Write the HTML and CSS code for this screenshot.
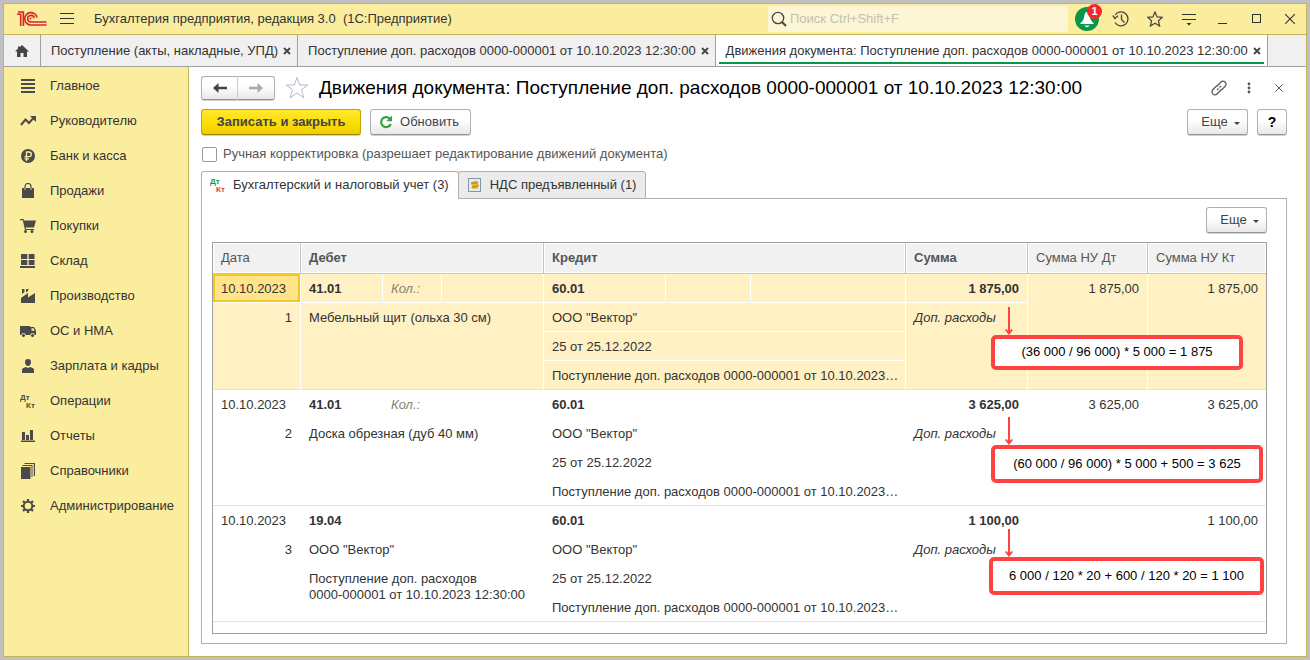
FILE: index.html
```
<!DOCTYPE html>
<html lang="ru">
<head>
<meta charset="utf-8">
<meta name="viewport" content="width=device-width, initial-scale=1">
<title>Бухгалтерия предприятия, редакция 3.0</title>
<link rel="stylesheet" href="styles.css">
</head>
<body>
<div class="window">
  <header class="titlebar">
    <svg class="logo" width="30" height="16" viewBox="0 0 30 16" fill="none" stroke="#d8232a" stroke-width="1.6"><path d="M0 3.200H3.700V15M1 1H6.400V15"/><path d="M20 6.500A6.200 6.200 0 1 0 14 14H29.500M17.200 7A3.300 3.300 0 1 0 14 11H29.500"/><path d="M15 7.600A1 1 0 1 0 14 8.800" stroke-width="1"/></svg>
    <button class="icon-btn burger" aria-label="Меню"><svg width="14" height="12" viewBox="0 0 14 12" fill="#333"><path d="M0 0H14V1H0ZM0 5H14V6H0ZM0 10H14V11H0Z"/></svg></button>
    <div class="app-title">Бухгалтерия предприятия, редакция 3.0&nbsp; (1С:Предприятие)</div>
    <label class="search">
      <svg width="16" height="16" viewBox="0 0 16 16" fill="none" stroke="#444" stroke-width="1.3"><circle cx="7" cy="7" r="5.7"/><path d="M11 11L15 15" stroke-width="2"/></svg>
      <input type="search" placeholder="Поиск Ctrl+Shift+F" aria-label="Поиск">
    </label>
    <div class="window-tools">
      <button class="icon-btn bell" aria-label="Уведомления"><svg width="24" height="24" viewBox="0 0 24 24"><circle cx="12" cy="12" r="12" fill="#0a9648"/><path d="M12 5C10.800 5 9.800 6 9.500 8L8.500 12.500L5 17H19L15.500 12.500L14.500 8C14.200 6 13.200 5 12 5ZM9 18.500H15L12 20.500Z" fill="#fff"/></svg><span class="badge">1</span></button>
      <button class="icon-btn" aria-label="История"><svg width="18" height="18" viewBox="0 0 18 18" fill="none" stroke="#444" stroke-width="1.3"><path d="M3.200 5A7 7 0 1 1 3 12.500M9.500 4.500V9.500L12.500 12.500"/><path d="M.8 5.500L3 8.500L6 5.800"/></svg></button>
      <button class="icon-btn" aria-label="Избранное"><svg width="16" height="16" viewBox="0 0 16 16" fill="none" stroke="#444" stroke-width="1.2"><path d="M8 1L10.100 5.900L15.400 6.300L11.400 9.700L12.600 15L8 12.200L3.400 15L4.600 9.700L.6 6.300L5.900 5.900Z"/></svg></button>
      <button class="icon-btn" aria-label="Настройки"><svg width="14" height="14" viewBox="0 0 14 14" fill="#333"><path d="M0 2H14V3H0ZM0 7H14V8H0ZM4.500 11H9.500L7 13.500Z"/></svg></button>
      <button class="icon-btn" aria-label="Свернуть"><svg width="10" height="10" viewBox="0 0 10 10"><path d="M0 9.500H9" stroke="#333"/></svg></button>
      <button class="icon-btn" aria-label="Развернуть"><svg width="10" height="10" viewBox="0 0 10 10"><rect x=".5" y=".5" width="8" height="8" fill="none" stroke="#333"/></svg></button>
      <button class="icon-btn" aria-label="Закрыть"><svg width="10" height="10" viewBox="0 0 10 10"><path d="M0 0L10 10M10 0L0 10" stroke="#333" stroke-width="1.100"/></svg></button>
    </div>
  </header>

  <nav class="tabs">
    <button class="home" aria-label="Начальная страница"><svg width="14" height="12" viewBox="0 0 14 12" fill="#444"><path d="M7 0L14 6.500H12V12H8.500V8H5.500V12H2V6.500H0L3 3.600V1.500H5V1.900Z"/></svg></button>
    <div class="tab"><span>Поступление (акты, накладные, УПД)</span><button class="tab-close" aria-label="Закрыть вкладку"><svg width="8" height="8" viewBox="0 0 8 8"><path d="M1 1L7 7M7 1L1 7"/></svg></button></div>
    <div class="tab"><span>Поступление доп. расходов 0000-000001 от 10.10.2023 12:30:00</span><button class="tab-close" aria-label="Закрыть вкладку"><svg width="8" height="8" viewBox="0 0 8 8"><path d="M1 1L7 7M7 1L1 7"/></svg></button></div>
    <div class="tab tab-active"><span>Движения документа: Поступление доп. расходов 0000-000001 от 10.10.2023 12:30:00</span><button class="tab-close" aria-label="Закрыть вкладку"><svg width="8" height="8" viewBox="0 0 8 8"><path d="M1 1L7 7M7 1L1 7"/></svg></button></div>
  </nav>

  <div class="body">
    <nav class="sidebar">
      <a href="#"><svg viewBox="0 0 16 16"><path d="M1 1H15V3H1ZM1 5H15V7H1ZM1 9H15V11H1ZM1 13H15V15H1Z"/></svg>Главное</a>
      <a href="#"><svg viewBox="0 0 16 16"><path d="M1 12L5.500 6.500L9 10L13.500 5" fill="none" stroke="#4a4a4a" stroke-width="2"/><path d="M10 3H16V9Z"/></svg>Руководителю</a>
      <a href="#"><svg viewBox="0 0 16 16"><circle cx="8" cy="8" r="7"/><path d="M6.500 13V4H9A2.300 2.300 0 0 1 9 8.700H4.500M4.500 10.800H9" fill="none" stroke="#fbed9e" stroke-width="1.300"/></svg>Банк и касса</a>
      <a href="#"><svg viewBox="0 0 16 16"><path d="M2 5H4V7H6V5H10V7H12V5H14V15H2Z"/><path d="M5 7V3.500A3 3 0 0 1 11 3.500V7" fill="none" stroke="#4a4a4a" stroke-width="1.200"/></svg>Продажи</a>
      <a href="#"><svg viewBox="0 0 16 16"><path d="M3.500 2.500H16L14 9.500H5ZM0 1H3.500L6 11H14V12H5L2.800 2.300H0Z"/><circle cx="5.500" cy="13.500" r="1.500"/><circle cx="12" cy="13.500" r="1.500"/></svg>Покупки</a>
      <a href="#"><svg viewBox="0 0 16 16"><path d="M1 1H7.300V6H1ZM8.700 1H14.500V6H8.700ZM1 7H7.300V12H1ZM8.700 7H14.500V12H8.700ZM0 13H15V15H0Z"/></svg>Склад</a>
      <a href="#"><svg viewBox="0 0 16 16"><path d="M2 1H4.500V4L2 6ZM6 1H8.500L8 3L6 4.500ZM1 10L8 5V9.500L15 5V15H1Z"/></svg>Производство</a>
      <a href="#"><svg viewBox="0 0 16 16"><path d="M0 3H10V4H14L16 7.500V12H0Z"/><path d="M11.500 5.200H13.500L14.700 7.800H11.500Z" fill="#fbed9e"/><g stroke="#fbed9e"><circle cx="3.500" cy="12.500" r="2"/><circle cx="12.500" cy="12.500" r="2"/></g></svg>ОС и НМА</a>
      <a href="#"><svg viewBox="0 0 16 16"><path d="M8 1C10 1 11 2.300 11 4C11 6 10 8 8 8C6 8 5 6 5 4C5 2.300 6 1 8 1ZM2 15V12C2 10 4 9.500 6 9L8 10L10 9C12 9.500 14 10 14 12V15Z"/></svg>Зарплата и кадры</a>
      <a href="#"><svg viewBox="0 0 16 16"><text x="0" y="7">Дт</text><text x="6" y="15">Кт</text></svg>Операции</a>
      <a href="#"><svg viewBox="0 0 16 16"><path d="M2 4H5V12H2ZM6 7H9V12H6ZM10 2H13V12H10ZM1 12.500H15V14H1Z"/></svg>Отчеты</a>
      <a href="#"><svg viewBox="0 0 16 16"><path d="M1 4H10.500V16H1ZM2.500 2H12.500V14H11.500V3H2.500ZM4.500 0H15V13H13.800V1H4.500Z"/></svg>Справочники</a>
      <a href="#"><svg viewBox="0 0 16 16"><circle cx="8" cy="8" r="4.300" fill="none" stroke="#4a4a4a" stroke-width="2"/><path d="M8 1V3.500M8 12.500V15M1 8H3.500M12.500 8H15M3 3L4.800 4.800M11.200 11.200L13 13M13 3L11.200 4.800M4.800 11.200L3 13" stroke="#4a4a4a" stroke-width="2.200"/></svg>Администрирование</a>
    </nav>

    <main class="main">
      <div class="heading">
        <div class="nav-buttons">
          <button class="btn" aria-label="Назад"><svg width="14" height="10" viewBox="0 0 14 10" fill="#444"><path d="M0 5L5.500 0V3.800H14V6.200H5.500V10Z"/></svg></button>
          <button class="btn" aria-label="Вперед"><svg width="14" height="10" viewBox="0 0 14 10" fill="#aaa"><path d="M14 5L8.500 0V3.800H0V6.200H8.500V10Z"/></svg></button>
        </div>
        <button class="icon-btn fav" aria-label="В избранное"><svg width="24" height="24" viewBox="0 0 24 24" fill="none" stroke="#b5bac2"><path d="M12 1.500L14.700 9H22.800L16.400 13.800L18.900 21.800L12 17L5.100 21.800L7.600 13.800L1.200 9H9.300Z"/></svg></button>
        <h1>Движения документа: Поступление доп. расходов 0000-000001 от 10.10.2023 12:30:00</h1>
        <div class="heading-tools">
          <button class="icon-btn" aria-label="Ссылка"><svg width="16" height="16" viewBox="0 0 16 16" fill="none" stroke="#555" stroke-width="1.200"><path d="M6 6L10 2Q12 0 14.300 2.200Q16 4.500 14 6.500L11 9.500Q10 10.300 8.800 10M10 10L6 14Q4 16 1.800 13.800Q0 11.500 2 9.500L5 6.500Q6 5.700 7.200 6M6 10L7.500 8.500M8.500 7.500L10 6"/></svg></button>
          <button class="icon-btn" aria-label="Дополнительно"><svg width="4" height="12" viewBox="0 0 4 12" fill="#555"><circle cx="2" cy="2" r="1.400"/><circle cx="2" cy="6" r="1.400"/><circle cx="2" cy="10" r="1.400"/></svg></button>
          <button class="icon-btn" aria-label="Закрыть форму"><svg width="8" height="8" viewBox="0 0 8 8"><path d="M.5 .5L7.500 7.500M7.500 .5L.5 7.500" stroke="#555"/></svg></button>
        </div>
      </div>

      <div class="commands">
        <button class="btn btn-primary">Записать и закрыть</button>
        <button class="btn btn-refresh"><svg width="14" height="14" viewBox="0 0 14 14"><path d="M10.500 3.300A5 5 0 1 0 11.800 9" fill="none" stroke="#35a344" stroke-width="2.200"/><path d="M13 .5V6.200H7.300Z" fill="#35a344"/></svg>Обновить</button>
        <button class="btn btn-more push">Еще<i class="caret"></i></button>
        <button class="btn btn-help">?</button>
      </div>

      <label class="manual"><input type="checkbox">Ручная корректировка (разрешает редактирование движений документа)</label>

      <div class="page-tabs" role="tablist">
        <button class="page-tab selected" role="tab" aria-selected="true"><svg class="dtkt" width="16" height="16" viewBox="0 0 16 16"><text x="0" y="7" fill="#0a9648">Дт</text><text x="6" y="15" fill="#e04040">Кт</text></svg>Бухгалтерский и налоговый учет (3)</button>
        <button class="page-tab" role="tab" aria-selected="false"><svg width="14" height="14" viewBox="0 0 14 14"><rect x=".5" y=".5" width="12" height="13" fill="#e4edf5" stroke="#8096ab"/><path d="M3 4L8 2.500L10.500 4L9.500 6L11 7L9.500 10.500L5 11L3 9.500L5 8L3 6.500Z" fill="#e8b523"/><path d="M3.500 5Q7 6 10 4.500M4 8.500Q7 9.500 10.500 7.500" stroke="#9a6a10" fill="none" stroke-width=".7"/></svg>НДС предъявленный (1)</button>
      </div>

      <section class="panel">
        <div class="panel-bar"><button class="btn btn-more">Еще<i class="caret"></i></button></div>
        <div class="grid">
          <table>
            <colgroup><col class="c-date"><col class="c-acc"><col class="c-label"><col class="c-qty"><col class="c-credit"><col class="c-cur"><col><col class="c-sum"><col class="c-nu"><col class="c-nu-last"></colgroup>
            <thead>
              <tr><th>Дата</th><th colspan="3" class="strong">Дебет</th><th colspan="3" class="strong">Кредит</th><th class="strong">Сумма</th><th>Сумма НУ Дт</th><th>Сумма НУ Кт</th></tr>
            </thead>
            <tbody class="current">
              <tr><td class="cell-active">10.10.2023</td><td class="strong">41.01</td><td class="hint">Кол.:</td><td></td><td class="strong">60.01</td><td></td><td></td><td class="strong num">1 875,00</td><td rowspan="4" class="num last">1 875,00</td><td rowspan="4" class="num last">1 875,00</td></tr>
              <tr><td rowspan="3" class="num last">1</td><td colspan="3" rowspan="3" class="last">Мебельный щит (ольха 30 см)</td><td colspan="3">ООО "Вектор"</td><td rowspan="3" class="note last">Доп. расходы
                <div class="callout callout-first"><svg width="8" height="28" viewBox="0 0 8 28"><path d="M4 0V27M.8 22.500L4 26.500L7.200 22.500"/></svg><div>(36 000 / 96 000) * 5 000 = 1 875</div></div></td></tr>
              <tr><td colspan="3">25 от 25.12.2022</td></tr>
              <tr><td colspan="3" class="last">Поступление доп. расходов 0000-000001 от 10.10.2023…</td></tr>
            </tbody>
            <tbody>
              <tr><td>10.10.2023</td><td class="strong">41.01</td><td class="hint">Кол.:</td><td></td><td class="strong">60.01</td><td></td><td></td><td class="strong num">3 625,00</td><td rowspan="4" class="num last">3 625,00</td><td rowspan="4" class="num last">3 625,00</td></tr>
              <tr><td rowspan="3" class="num last">2</td><td colspan="3" rowspan="3" class="last">Доска обрезная (дуб 40 мм)</td><td colspan="3">ООО "Вектор"</td><td rowspan="3" class="note last">Доп. расходы
                <div class="callout callout-second"><svg width="8" height="28" viewBox="0 0 8 28"><path d="M4 0V27M.8 22.500L4 26.500L7.200 22.500"/></svg><div>(60 000 / 96 000) * 5 000 + 500 = 3 625</div></div></td></tr>
              <tr><td colspan="3">25 от 25.12.2022</td></tr>
              <tr><td colspan="3" class="last">Поступление доп. расходов 0000-000001 от 10.10.2023…</td></tr>
            </tbody>
            <tbody>
              <tr><td>10.10.2023</td><td class="strong">19.04</td><td></td><td></td><td class="strong">60.01</td><td></td><td></td><td class="strong num">1 100,00</td><td rowspan="4" class="last"></td><td rowspan="4" class="num last">1 100,00</td></tr>
              <tr><td rowspan="3" class="num last">3</td><td colspan="3">ООО "Вектор"</td><td colspan="3">ООО "Вектор"</td><td rowspan="3" class="note last">Доп. расходы
                <div class="callout callout-third"><svg width="8" height="28" viewBox="0 0 8 28"><path d="M4 0V27M.8 22.500L4 26.500L7.200 22.500"/></svg><div>6 000 / 120 * 20 + 600 / 120 * 20 = 1 100</div></div></td></tr>
              <tr><td colspan="3" rowspan="2" class="last">Поступление доп. расходов<br>0000-000001 от 10.10.2023 12:30:00</td><td colspan="3">25 от 25.12.2022</td></tr>
              <tr><td colspan="3" class="last">Поступление доп. расходов 0000-000001 от 10.10.2023…</td></tr>
            </tbody>
          </table>
        </div>
      </section>
    </main>
  </div>
</div>
</body>
</html>
```
FILE: styles.css
```
* { box-sizing: border-box; }

body {
  margin: 0;
  padding: 3px;
  min-height: 100vh;
  display: flex;
  background: #c0c0c0;
  color: #333;
  font: 13px/16px "Liberation Sans", Arial, sans-serif;
}

button, input { font: inherit; color: inherit; }
svg { display: block; flex: none; }

.window {
  flex: 1;
  min-width: 0;
  display: flex;
  flex-direction: column;
  border: 1px solid #c4b55c;
  background: #fff;
}

.icon-btn {
  display: flex;
  align-items: center;
  justify-content: center;
  padding: 0;
  border: 0;
  background: none;
}

/* Title bar */
.titlebar {
  display: flex;
  align-items: center;
  height: 31px;
  padding-left: 13px;
  background: #fbed9e;
  border-bottom: 1px solid #c4b55c;
}
.burger { width: 14px; margin: 0 20px 0 13px; }
.app-title { flex: 1; white-space: nowrap; }
.search {
  display: flex;
  align-items: center;
  gap: 3px;
  width: 300px;
  height: 26px;
  margin-right: 2px;
  padding: 0 3px;
  border-radius: 3px;
  background: #fdf6d4;
}
.search input {
  flex: 1;
  min-width: 0;
  padding: 0;
  border: 0;
  outline: 0;
  background: none;
}
.search input::placeholder { color: #c3c0b4; opacity: 1; }
.window-tools { display: flex; }
.window-tools .icon-btn { width: 34px; height: 30px; }
.window-tools .icon-btn:last-child { width: 32px; }
.bell { position: relative; }
.badge {
  position: absolute;
  top: 0;
  right: 2px;
  width: 15px;
  height: 15px;
  border-radius: 8px;
  background: #f8262b;
  color: #fff;
  font: bold 11px/15px "Liberation Sans", Arial, sans-serif;
}

/* Open documents */
.tabs {
  display: flex;
  height: 32px;
  background: #f0f0f0;
  border-bottom: 1px solid #a0a0a0;
}
.home {
  display: flex;
  align-items: center;
  justify-content: center;
  width: 37px;
  padding: 0;
  border: 0;
  border-right: 1px solid #a0a0a0;
  background: none;
}
.tab {
  position: relative;
  display: flex;
  align-items: center;
  gap: 5px;
  padding: 0 6px 0 10px;
  border-right: 1px solid #a0a0a0;
  white-space: nowrap;
}
.tab-close { padding: 0; border: 0; background: none; }
.tab-close path { stroke: #444; stroke-width: 1.8; }
.tab-active { background: #fff; }
.tab-active::after {
  content: "";
  position: absolute;
  left: 3px;
  right: 3px;
  bottom: 2px;
  height: 2px;
  background: #0a9648;
}

.body { flex: 1; display: flex; min-height: 0; }

/* Sections */
.sidebar {
  flex: none;
  width: 185px;
  background: #fbed9e;
  border-right: 1px solid #c4b55c;
}
.sidebar a {
  display: flex;
  align-items: center;
  gap: 14px;
  height: 35px;
  padding: 2px 0 0 16px;
  color: #333;
  text-decoration: none;
  white-space: nowrap;
}
.sidebar svg { width: 16px; height: 16px; fill: #4a4a4a; }
svg text { font: bold 8px "Liberation Sans", Arial, sans-serif; }

/* Form */
.main {
  flex: 1;
  min-width: 0;
  display: flex;
  flex-direction: column;
  padding: 8px 19px 12px 12px;
}
.btn {
  display: flex;
  align-items: center;
  justify-content: center;
  height: 26px;
  padding: 0;
  border: 1px solid #b0b0b0;
  border-bottom-color: #959595;
  border-radius: 3px;
  background: linear-gradient(#fff 40%, #e8e8e8);
  box-shadow: 0 1px #d0d0d0;
  color: #444;
}
.heading { display: flex; align-items: center; height: 25px; margin-bottom: 9px; }
.nav-buttons { display: flex; }
.nav-buttons .btn { width: 37px; height: 24px; }
.nav-buttons .btn:first-child { border-radius: 3px 0 0 3px; border-right-color: #ccc; }
.nav-buttons .btn:last-child { border-left: 0; border-radius: 0 3px 3px 0; }
.fav { margin: 0 10px; }
h1 {
  flex: 1;
  margin: 0;
  color: #000;
  font: 19px/24px "Liberation Sans", Arial, sans-serif;
  white-space: nowrap;
}
.heading-tools { display: flex; }
.heading-tools .icon-btn { width: 30px; height: 24px; }
.heading-tools .icon-btn:last-child { margin-right: -7px; }

.commands { display: flex; gap: 9px; margin-bottom: 1px; }
.btn-primary {
  width: 160px;
  border-color: #c0a200;
  border-bottom-color: #a08600;
  background: linear-gradient(#ffe92e, #fbdc00 60%, #eccd00);
  font-weight: bold;
}
.btn-refresh { width: 101px; gap: 7px; padding-right: 3px; }
.btn-more { width: 61px; gap: 6px; padding-left: 6px; }
.btn-help { width: 30px; color: #000; font-size: 14px; font-weight: bold; }
.push { margin-left: auto; }
.caret {
  margin-top: 2px;
  border: 3px solid transparent;
  border-top-color: #444;
  border-bottom: 0;
}

.manual {
  display: flex;
  align-items: center;
  gap: 6px;
  margin: 10px 0 9px 1px;
  color: #555;
}
.manual input {
  appearance: none;
  width: 15px;
  height: 15px;
  margin: 0;
  border: 1px solid #999;
  border-radius: 2px;
  background: #fff;
}

.page-tabs { z-index: 1; display: flex; margin-bottom: -1px; }
.page-tab {
  display: flex;
  align-items: center;
  gap: 8px;
  height: 28px;
  padding: 0 9px;
  border: 1px solid #b0b0b0;
  border-radius: 3px 3px 0 0;
  background: #ebebeb;
  white-space: nowrap;
}
.page-tab + .page-tab { margin-left: -1px; }
.page-tab.selected {
  gap: 7px;
  padding-left: 8px;
  background: #fff;
  border-bottom-color: #fff;
}

.panel {
  flex: 1;
  display: flex;
  flex-direction: column;
  padding: 8px 19px 9px 10px;
  border: 1px solid #b0b0b0;
}
.panel-bar { display: flex; justify-content: flex-end; margin-bottom: 9px; }

/* Entries */
.grid { flex: 1; border: 1px solid #a0a0a0; }
table {
  width: 100%;
  table-layout: fixed;
  border-collapse: separate;
  border-spacing: 0;
}
.c-date { width: 88px; }
.c-acc { width: 82px; }
.c-label { width: 59px; }
.c-qty { width: 102px; }
.c-credit { width: 122px; }
.c-cur { width: 85px; }
.c-sum { width: 122px; }
.c-nu { width: 120px; }
.c-nu-last { width: 118px; }

th {
  height: 31px;
  padding: 0 8px;
  border-right: 1px solid #c4c4c4;
  border-bottom: 1px solid #c4c4c4;
  background: #f1f1f1;
  box-shadow: inset 0 0 0 1px #fff;
  color: #555;
  font-weight: normal;
  text-align: left;
}
th:last-child { border-right: 0; }
td {
  height: 29px;
  padding: 7px 8px 5px;
  border-right: 1px solid #fff;
  border-bottom: 1px solid #fff;
  vertical-align: top;
  white-space: nowrap;
}
tr:first-child td:last-child { border-right: 0; }
td.last { border-bottom-color: #e2e2e2; }
.current td { background: #fff1c4; }
.current td.cell-active { background: #ffe48c; box-shadow: inset 0 0 0 2px #f8c51c; }
.strong, th.strong { font-weight: bold; }
.num { text-align: right; }
.hint { color: #888170; font-style: italic; }
.note { position: relative; font-style: italic; }

/* Calculation notes laid over the table */
.callout {
  position: absolute;
  z-index: 2;
  left: 85px;
  color: #000;
  font-style: normal;
  text-align: center;
}
.callout svg { margin-left: 14px; fill: none; stroke: #ff4343; stroke-width: 2; }
.callout div {
  padding: 7px 0;
  border: 4px solid #ff4343;
  border-radius: 5px;
  background: #fff;
}
.callout-first { top: 4px; width: 252px; }
.callout-first div { padding: 5px 0 6px; }
.callout-second { top: -2px; width: 272px; }
.callout-third { top: -6px; left: 83px; width: 275px; }
.callout-third svg { margin-left: 16px; }
```
